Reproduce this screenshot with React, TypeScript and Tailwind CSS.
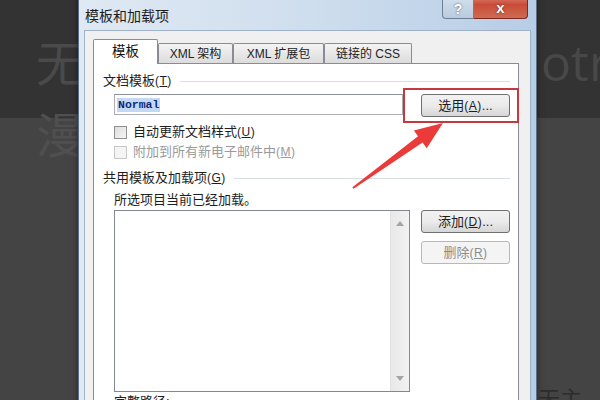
import React from "react";

const font = "font-['Liberation_Sans','Noto_Sans_CJK_SC',sans-serif]";

function Key({ k }: { k: string }) {
  return (
    <span className="text-[12px] tracking-[0.5px]">
      (<span className="underline">{k}</span>)
    </span>
  );
}

function Tab({ label, active, w }: { label: string; active?: boolean; w: string }) {
  if (active) {
    return (
      <div
        className={`${w} h-[25px] -mb-px relative z-10 flex items-center justify-center border border-b-0 border-[#898c95] bg-white text-[13.5px] text-[#111] rounded-t-[2px]`}
      >
        {label}
      </div>
    );
  }
  return (
    <div
      className={`${w} h-[20px] flex items-center justify-center border border-b-0 border-[#898c95] bg-gradient-to-b from-[#f4f4f4] to-[#dcdcdc] text-[12px] text-[#222] rounded-t-[2px]`}
    >
      {label}
    </div>
  );
}

function GroupLabel({ text, k }: { text: string; k: string }) {
  return (
    <div className="flex items-center h-[14px] leading-[14px] text-[13px] text-[#1e1e1e]">
      <span>
        {text}
        <Key k={k} />
      </span>
      <div className="flex-1 h-px bg-[#d5dfe5] ml-[8px] mr-[8px]" />
    </div>
  );
}

function Checkbox({ label, k, disabled }: { label: string; k: string; disabled?: boolean }) {
  return (
    <div className="flex items-center h-[14px] ml-[11px] gap-[6px]">
      <div
        className={`w-[13px] h-[13px] border ${
          disabled ? "border-[#c7c7c7] bg-[#f4f4f4]" : "border-[#8e8f8f] bg-gradient-to-br from-[#dcdcdc] to-[#f6f6f6]"
        }`}
      />
      <span className={`text-[13px] leading-[14px] ${disabled ? "text-[#9a9a9a]" : "text-[#1e1e1e]"}`}>
        {label}
        <Key k={k} />
      </span>
    </div>
  );
}

function Button({ children, disabled, className = "" }: { children: React.ReactNode; disabled?: boolean; className?: string }) {
  return (
    <div
      className={`w-[89px] h-[23px] flex items-center justify-center rounded-[3px] border text-[13px] ${
        disabled
          ? "border-[#b5b9bc] bg-[#f4f4f4] text-[#8d8d8d]"
          : "border-[#707070] bg-gradient-to-b from-[#f2f2f2] via-[#ebebeb] to-[#d6d6d6] text-[#1e1e1e]"
      } ${className}`}
    >
      {children}
    </div>
  );
}

export default function App() {
  return (
    <div className={`relative w-[600px] h-[400px] overflow-hidden bg-[#444444] ${font}`}>
      <div className="h-[118px] bg-[#333333]" />

      {/* desktop text behind the dialog */}
      <div className="absolute left-[36px] top-[30px] text-[48px] leading-[60px] text-[#4a4a4a] font-['Noto_Sans_CJK_SC',sans-serif]">
        无
      </div>
      <div className="absolute left-[36px] top-[102px] text-[48px] leading-[60px] text-[#4f4f4f] font-['Noto_Sans_CJK_SC',sans-serif]">
        漫
      </div>
      <div className="absolute left-[541px] top-[32px] text-[50px] leading-[60px] text-[#484848] font-['Open_Sans',sans-serif]">
        otr
      </div>
      <div className="absolute left-[538px] top-[384px] text-[22px] leading-[26px] text-[#2c2c2c] font-['Noto_Sans_CJK_SC',sans-serif]">
        无主文
      </div>

      {/* dialog window */}
      <div className="absolute left-[78px] top-[-10px] w-[459px] h-[430px] flex flex-col border border-[#5b6f87] bg-gradient-to-r from-[#dfe9f3] via-[#cfdeee] to-[#b7cde6] shadow-[0_0_6px_rgba(0,0,0,0.5)]">
        <div className="h-[39px] flex items-start">
          <div className="pt-[16px] pl-[6px] text-[14px] leading-[18px] text-[#1b1b1b]">模板和加载项</div>
          <div className="ml-auto mr-[8px] flex">
            <div className="w-[32px] h-[28px] flex justify-center pt-[11px] leading-[14px] border border-[#6d7f95] border-t-0 rounded-bl-[4px] bg-gradient-to-b from-[#dbe6f2] to-[#b9cbe0] text-[14px] font-bold text-white [text-shadow:0_0_2px_#3b5170]">
              ?
            </div>
            <div className="w-[54px] h-[28px] flex justify-center pt-[10px] leading-[14px] border border-[#7a2a1f] border-t-0 border-l-0 rounded-br-[4px] bg-gradient-to-b from-[#e4a095] via-[#c94c38] to-[#cf6a52] text-[15px] font-bold text-white [text-shadow:0_0_2px_#5a1a10]">
              x
            </div>
          </div>
        </div>

        <div className="flex-1 mx-[5px] flex flex-col bg-[#f0f0f0] border border-[#9fb1c6] pl-[8px] pr-[11px] pt-[8px]">
          <div className="flex items-end">
            <Tab label="模板" active w="w-[65px]" />
            <Tab label="XML 架构" w="w-[75px]" />
            <Tab label="XML 扩展包" w="w-[91px]" />
            <Tab label="链接的 CSS" w="w-[88px]" />
          </div>

          <div className="flex-1 border border-[#898c95] bg-white pl-[9px] pt-[10px] flex flex-col">
            <GroupLabel text="文档模板" k="T" />

            <div className="flex mt-[6px] ml-[11px] items-start">
              <div className="w-[289px] h-[21px] border border-[#abadb3] border-t-[#8d9097] bg-white flex items-center px-[2px]">
                <span className="bg-[#c3d9f3] text-[#0f2a78] font-['Liberation_Mono',monospace] font-bold text-[11.5px] leading-[14px] px-[1px]">
                  Normal
                </span>
              </div>
              <Button className="ml-[18px]">
                选用<Key k="A" />...
              </Button>
            </div>

            <div className="mt-[8px]">
              <Checkbox label="自动更新文档样式" k="U" />
            </div>
            <div className="mt-[6px]">
              <Checkbox label="附加到所有新电子邮件中" k="M" disabled />
            </div>

            <div className="mt-[12px]">
              <GroupLabel text="共用模板及加载项" k="G" />
            </div>
            <div className="mt-[8px] ml-[11px] text-[13px] leading-[14px] text-[#1e1e1e]">所选项目当前已经加载。</div>

            <div className="flex mt-[3px] ml-[11px] items-start">
              <div className="w-[296px] h-[182px] border border-[#828790] bg-white flex justify-end">
                <div className="w-[19px] h-full bg-gradient-to-r from-[#e8e8e8] to-[#f2f2f2] border-l border-[#e3e3e3] flex flex-col items-center justify-between py-[10px]">
                  <svg width="8" height="5" viewBox="0 0 8 5">
                    <path d="M0 5 L4 0 L8 5 Z" fill="#a4a4a4" />
                  </svg>
                  <svg width="8" height="5" viewBox="0 0 8 5">
                    <path d="M0 0 L8 0 L4 5 Z" fill="#a4a4a4" />
                  </svg>
                </div>
              </div>
              <div className="ml-[11px] flex flex-col gap-[8px]">
                <Button>
                  添加<Key k="D" />...
                </Button>
                <Button disabled>
                  删除<Key k="R" />
                </Button>
              </div>
            </div>

            <div className="mt-[3px] ml-[11px] text-[13px] leading-[14px] text-[#1e1e1e]">完整路径:</div>
          </div>
        </div>
      </div>

      {/* annotation */}
      <div className="absolute left-[403px] top-[88px] w-[116px] h-[35px] border-2 border-[#c5383e]" />
      <svg className="absolute left-0 top-0" width="600" height="400" viewBox="0 0 600 400">
        <polygon
          points="352.4,187.2 418,136.2 413.9,130.5 443,123 426.7,148.3 422.6,142.6 353.6,188.8"
          fill="#ea3a3a"
        />
      </svg>
    </div>
  );
}
